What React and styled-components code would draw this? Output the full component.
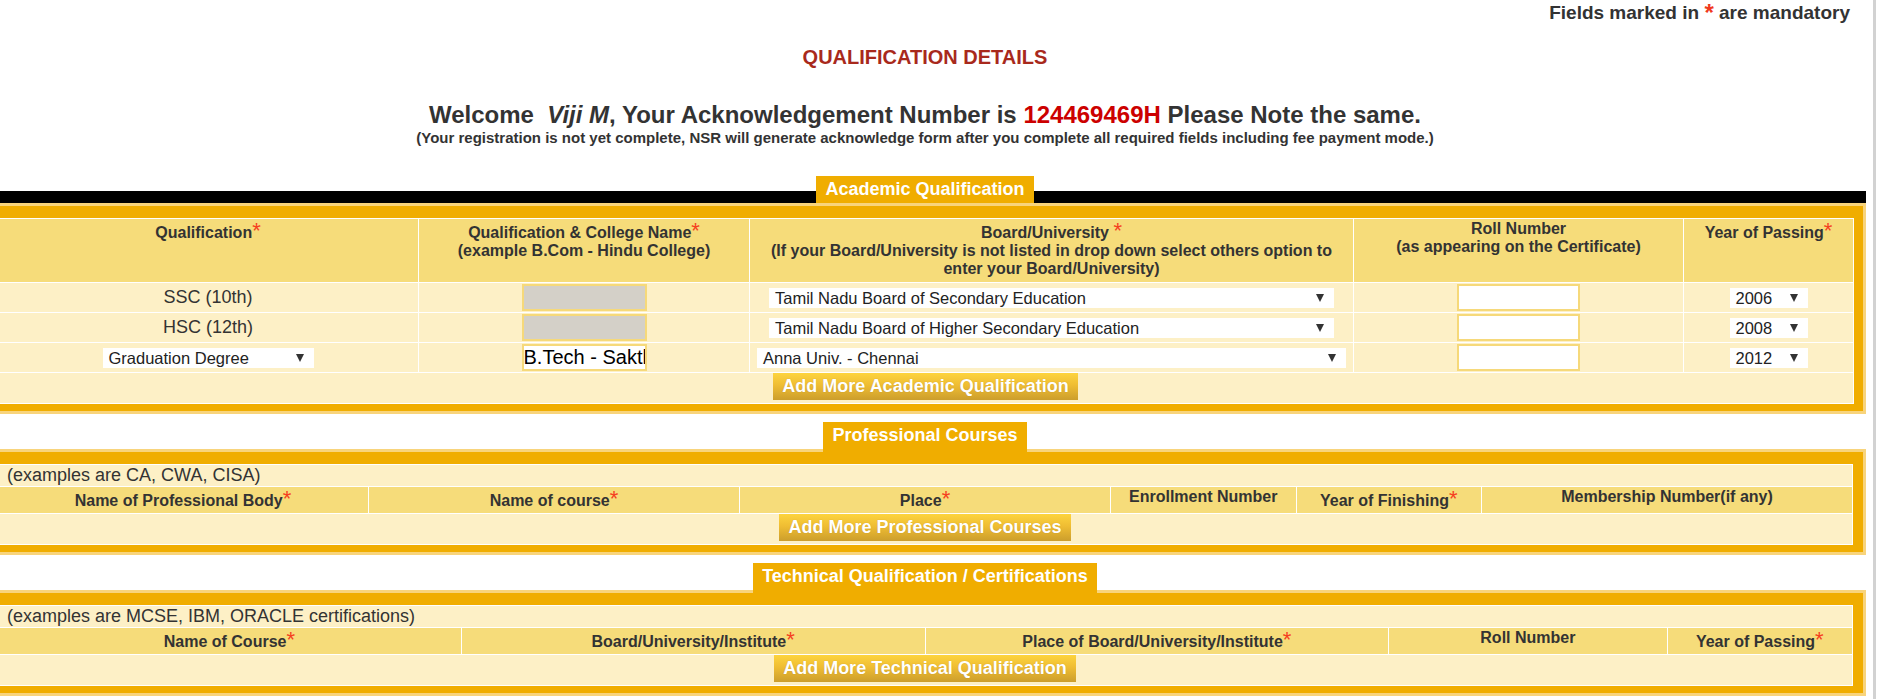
import React from "react";
import styled, { createGlobalStyle } from "styled-components";

const GlobalStyle = createGlobalStyle`
  html, body {
    margin: 0;
    padding: 0;
    background: #fff;
  }
  body {
    font-family: "Liberation Sans", Arial, sans-serif;
    color: #333;
    overflow: hidden;
  }
`;

const Page = styled.div`
  width: 1873px;
  min-height: 699px;
  border-right: 3px solid #d2d2d2;
  overflow: hidden;
`;

const Content = styled.div`
  width: 1882px;
  margin-left: -16px;
  padding-top: 2px;
`;

const Mandatory = styled.div`
  text-align: right;
  padding-right: 16px;
  font-size: 19px;
  font-weight: bold;
  line-height: 22px;
  color: #333;
`;

const BigStar = styled.span`
  color: #f03a1e;
  font-size: 24px;
  line-height: 22px;
  vertical-align: top;
`;

const PageTitle = styled.h2`
  margin: 22px 0 0;
  text-align: center;
  font-size: 20px;
  line-height: 22px;
  color: #a8291c;
`;

const Welcome = styled.h1`
  margin: 33px 0 0;
  text-align: center;
  font-size: 24px;
  line-height: 28px;
  color: #333;

  em {
    font-style: italic;
  }
`;

const AckNo = styled.span`
  color: #cc0000;
`;

const Note = styled.p`
  margin: 1px 0 0;
  text-align: center;
  font-size: 15px;
  line-height: 16px;
  font-weight: bold;
  color: #333;
`;

const Sections = styled.div`
  margin-top: 30px;
  display: flex;
  flex-direction: column;
  gap: 8px;
`;

const TabRow = styled.div`
  height: 27px;
  display: flex;
  justify-content: center;
  background: ${(p) =>
    p.$bar ? "linear-gradient(to bottom, transparent 15px, #000 15px)" : "transparent"};
`;

const Tab = styled.div`
  position: relative;
  z-index: 1;
  align-self: flex-start;
  height: ${(p) => (p.$bar ? 27 : 30)}px;
  padding: 0 9px;
  background: #f0ad00;
  color: #fff;
  font-size: 18px;
  font-weight: bold;
  line-height: 27px;
`;

const Frame = styled.div`
  border: 3px solid #f8d47c;
  background: #f0ad00;
  padding: 12px 10px 7px;
`;

const Grid = styled.table`
  width: 100%;
  border-collapse: collapse;
  table-layout: fixed;

  th,
  td {
    border: 1px solid #fff;
  }
`;

const Row = styled.tr`
  height: ${(p) => p.$h}px;
`;

const HeadCell = styled.th`
  background: #f6dc7a;
  font-size: 16px;
  font-weight: bold;
  color: #333;
  text-align: center;
  vertical-align: top;
  padding: 1px 2px;
`;

const Cell = styled.td`
  background: #fdf0c6;
  font-size: 18px;
  color: #333;
  text-align: ${(p) => p.$align || "center"};
  vertical-align: ${(p) => p.$valign || "middle"};
  padding: 0 ${(p) => p.$pad ?? 2}px;
`;

const Req = styled.span`
  color: #f5401f;
  font-size: 22px;
  line-height: 22px;
  font-weight: normal;
`;

const TextBox = styled.input`
  box-sizing: border-box;
  width: ${(p) => p.$w}px;
  height: 27px;
  border: 2px solid #f6d97a;
  background: ${(p) => (p.$locked ? "#d4d0c8" : "#fff")};
  font-family: "Liberation Sans", Arial, sans-serif;
  font-size: 20px;
  color: #000;
  padding: 0;
  margin: 0;
  outline: none;
  vertical-align: middle;
`;

const Dropdown = styled.div`
  display: inline-flex;
  align-items: center;
  justify-content: space-between;
  box-sizing: border-box;
  width: ${(p) => p.$w}px;
  height: 20px;
  padding: 0 10px 0 6px;
  background: #fff;
  font-size: 16.5px;
  line-height: 20px;
  color: #222;
  text-align: left;
  vertical-align: middle;
  white-space: nowrap;
`;

const Caret = styled.span`
  width: 0;
  height: 0;
  border-left: 4px solid transparent;
  border-right: 4px solid transparent;
  border-top: 8px solid #333;
`;

const AddButton = styled.button`
  display: inline-block;
  vertical-align: top;
  height: 27px;
  padding: 0 9px;
  margin: 0;
  border: 0;
  background: linear-gradient(to bottom, #fdd43e 0%, #efbd33 45%, #cc9e2c 100%);
  color: #fff;
  font-family: "Liberation Sans", Arial, sans-serif;
  font-size: 18px;
  font-weight: bold;
  line-height: 27px;
  text-shadow: 0 0 1px rgba(120, 80, 0, 0.35);
  cursor: pointer;
`;

const Select = ({ width, children }) => (
  <Dropdown $w={width}>
    <span>{children}</span>
    <Caret />
  </Dropdown>
);

const Section = ({ title, bar, children }) => (
  <section>
    <TabRow $bar={bar}>
      <Tab $bar={bar}>{title}</Tab>
    </TabRow>
    <Frame>{children}</Frame>
  </section>
);

const academicRows = [
  { level: "SSC (10th)", board: "Tamil Nadu Board of Secondary Education", boardW: 565, year: "2006" },
  { level: "HSC (12th)", board: "Tamil Nadu Board of Higher Secondary Education", boardW: 565, year: "2008" },
  {
    degree: "Graduation Degree",
    course: "B.Tech - Sakthi Engineering College",
    board: "Anna Univ. - Chennai",
    boardW: 589,
    year: "2012",
  },
];

const professionalCols = [
  { w: "20%", label: "Name of Professional Body", req: true },
  { w: "20%", label: "Name of course", req: true },
  { w: "20%", label: "Place", req: true },
  { w: "10%", label: "Enrollment Number" },
  { w: "10%", label: "Year of Finishing", req: true },
  { w: "20%", label: "Membership Number(if any)" },
];

const technicalCols = [
  { w: "25%", label: "Name of Course", req: true },
  { w: "25%", label: "Board/University/Institute", req: true },
  { w: "25%", label: "Place of Board/University/Institute", req: true },
  { w: "15%", label: "Roll Number" },
  { w: "10%", label: "Year of Passing", req: true },
];

const ListTable = ({ cols, example, button }) => (
  <Grid>
    <colgroup>
      {cols.map((c) => (
        <col key={c.label} style={{ width: c.w }} />
      ))}
    </colgroup>
    <tbody>
      <Row $h={22}>
        <Cell colSpan={cols.length} $align="left" $pad={9}>
          {example}
        </Cell>
      </Row>
      <Row $h={27}>
        {cols.map((c) => (
          <HeadCell key={c.label}>
            {c.label}
            {c.req && <Req>*</Req>}
          </HeadCell>
        ))}
      </Row>
      <Row $h={31}>
        <Cell colSpan={cols.length} $valign="top" $pad={0}>
          <AddButton type="button">{button}</AddButton>
        </Cell>
      </Row>
    </tbody>
  </Grid>
);

export default function App() {
  return (
    <Page>
      <GlobalStyle />
      <Content>
        <Mandatory>
          Fields marked in <BigStar>*</BigStar> are mandatory
        </Mandatory>
        <PageTitle>QUALIFICATION DETAILS</PageTitle>
        <Welcome>
          Welcome&nbsp; <em>Viji M</em>, Your Acknowledgement Number is{" "}
          <AckNo>124469469H</AckNo> Please Note the same.
        </Welcome>
        <Note>
          (Your registration is not yet complete, NSR will generate acknowledge form after you
          complete all required fields including fee payment mode.)
        </Note>

        <Sections>
          <Section title="Academic Qualification" bar>
            <Grid>
              <colgroup>
                <col style={{ width: 421 }} />
                <col style={{ width: 331 }} />
                <col style={{ width: 604 }} />
                <col style={{ width: 330 }} />
                <col style={{ width: 170 }} />
              </colgroup>
              <tbody>
                <Row $h={64}>
                  <HeadCell>
                    Qualification<Req>*</Req>
                  </HeadCell>
                  <HeadCell>
                    Qualification &amp; College Name<Req>*</Req>
                    <br />
                    (example B.Com - Hindu College)
                  </HeadCell>
                  <HeadCell>
                    Board/University <Req>*</Req>
                    <br />
                    (If your Board/University is not listed in drop down select others option to
                    enter your Board/University)
                  </HeadCell>
                  <HeadCell>
                    Roll Number
                    <br />
                    (as appearing on the Certificate)
                  </HeadCell>
                  <HeadCell>
                    Year of Passing<Req>*</Req>
                  </HeadCell>
                </Row>
                {academicRows.map((r) => (
                  <Row $h={30} key={r.year}>
                    <Cell>{r.level ? r.level : <Select width={211}>{r.degree}</Select>}</Cell>
                    <Cell>
                      {r.course ? (
                        <TextBox $w={125} defaultValue={r.course} />
                      ) : (
                        <TextBox $w={125} $locked readOnly />
                      )}
                    </Cell>
                    <Cell>
                      <Select width={r.boardW}>{r.board}</Select>
                    </Cell>
                    <Cell>
                      <TextBox $w={123} />
                    </Cell>
                    <Cell>
                      <Select width={78}>{r.year}</Select>
                    </Cell>
                  </Row>
                ))}
                <Row $h={31}>
                  <Cell colSpan={5} $valign="top" $pad={0}>
                    <AddButton type="button">Add More Academic Qualification</AddButton>
                  </Cell>
                </Row>
              </tbody>
            </Grid>
          </Section>

          <Section title="Professional Courses">
            <ListTable
              cols={professionalCols}
              example="(examples are CA, CWA, CISA)"
              button="Add More Professional Courses"
            />
          </Section>

          <Section title="Technical Qualification / Certifications">
            <ListTable
              cols={technicalCols}
              example="(examples are MCSE, IBM, ORACLE certifications)"
              button="Add More Technical Qualification"
            />
          </Section>
        </Sections>
      </Content>
    </Page>
  );
}
